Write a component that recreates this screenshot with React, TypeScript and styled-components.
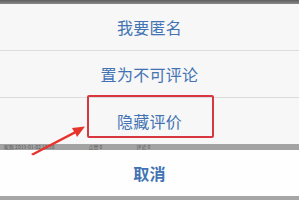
import * as React from 'react'
import styled, {createGlobalStyle} from 'styled-components'

const Global = createGlobalStyle`
  html, body { margin: 0; padding: 0; }
  body { font-family: "Noto Sans CJK SC", "Noto Sans", sans-serif; }
`

const Root = styled.div`
  position: relative;
  width: 299px;
  height: 200px;
  overflow: hidden;
  background: #9c9c9c;
  display: flex;
  flex-direction: column;
`

const TopStrip = styled.div`
  height: 4px;
  background: linear-gradient(#5e5e5e, #8a8a8a);
`

const Group = styled.div`
  display: flex;
  flex-direction: column;
  background: #f7f7f7;
`

const Row = styled.div<{$bold?: boolean; $white?: boolean}>`
  height: 46px;
  display: flex;
  align-items: center;
  justify-content: center;
  background: ${p => (p.$white ? '#fefefe' : '#f7f7f7')};
  color: #4273b3;
  font-size: 16px;
  font-weight: ${p => (p.$bold ? 700 : 400)};
  letter-spacing: 0.3px;
  & + & {
    border-top: 1px solid #dcdcdc;
  }
`

const Band = styled.div`
  height: 6px;
  background: #a3a3a3;
  overflow: hidden;
  display: flex;
  align-items: center;
  gap: 34px;
  padding-left: 4px;
  color: #5a5a5a;
  font-size: 5px;
  line-height: 6px;
  white-space: nowrap;
`

const BottomStrip = styled.div`
  flex: 1;
  background: #a6a6a6;
`

const Highlight = styled.div`
  position: absolute;
  left: 87px;
  top: 95px;
  width: 123px;
  height: 39px;
  border: 2px solid #d8373f;
  border-radius: 2px;
`

const Arrow = styled.svg`
  position: absolute;
  left: 0;
  top: 0;
`

export default function App() {
  return (
    <>
      <Global />
      <Root>
        <TopStrip />
        <Group>
          <Row>我要匿名</Row>
          <Row>置为不可评论</Row>
          <Row>隐藏评价</Row>
        </Group>
        <Band>
          <span>昵称 2019-01-02 12:30</span>
          <span>点赞 0</span>
          <span>评论 0</span>
        </Band>
        <Row $bold $white>取消</Row>
        <BottomStrip />
        <Highlight />
        <Arrow width="299" height="200" viewBox="0 0 299 200">
          <polygon points="31,154 74,131.5 72,128 85,126.5 77,137 75.5,133.5 33,155.5" fill="#e8332c" />
        </Arrow>
      </Root>
    </>
  )
}
